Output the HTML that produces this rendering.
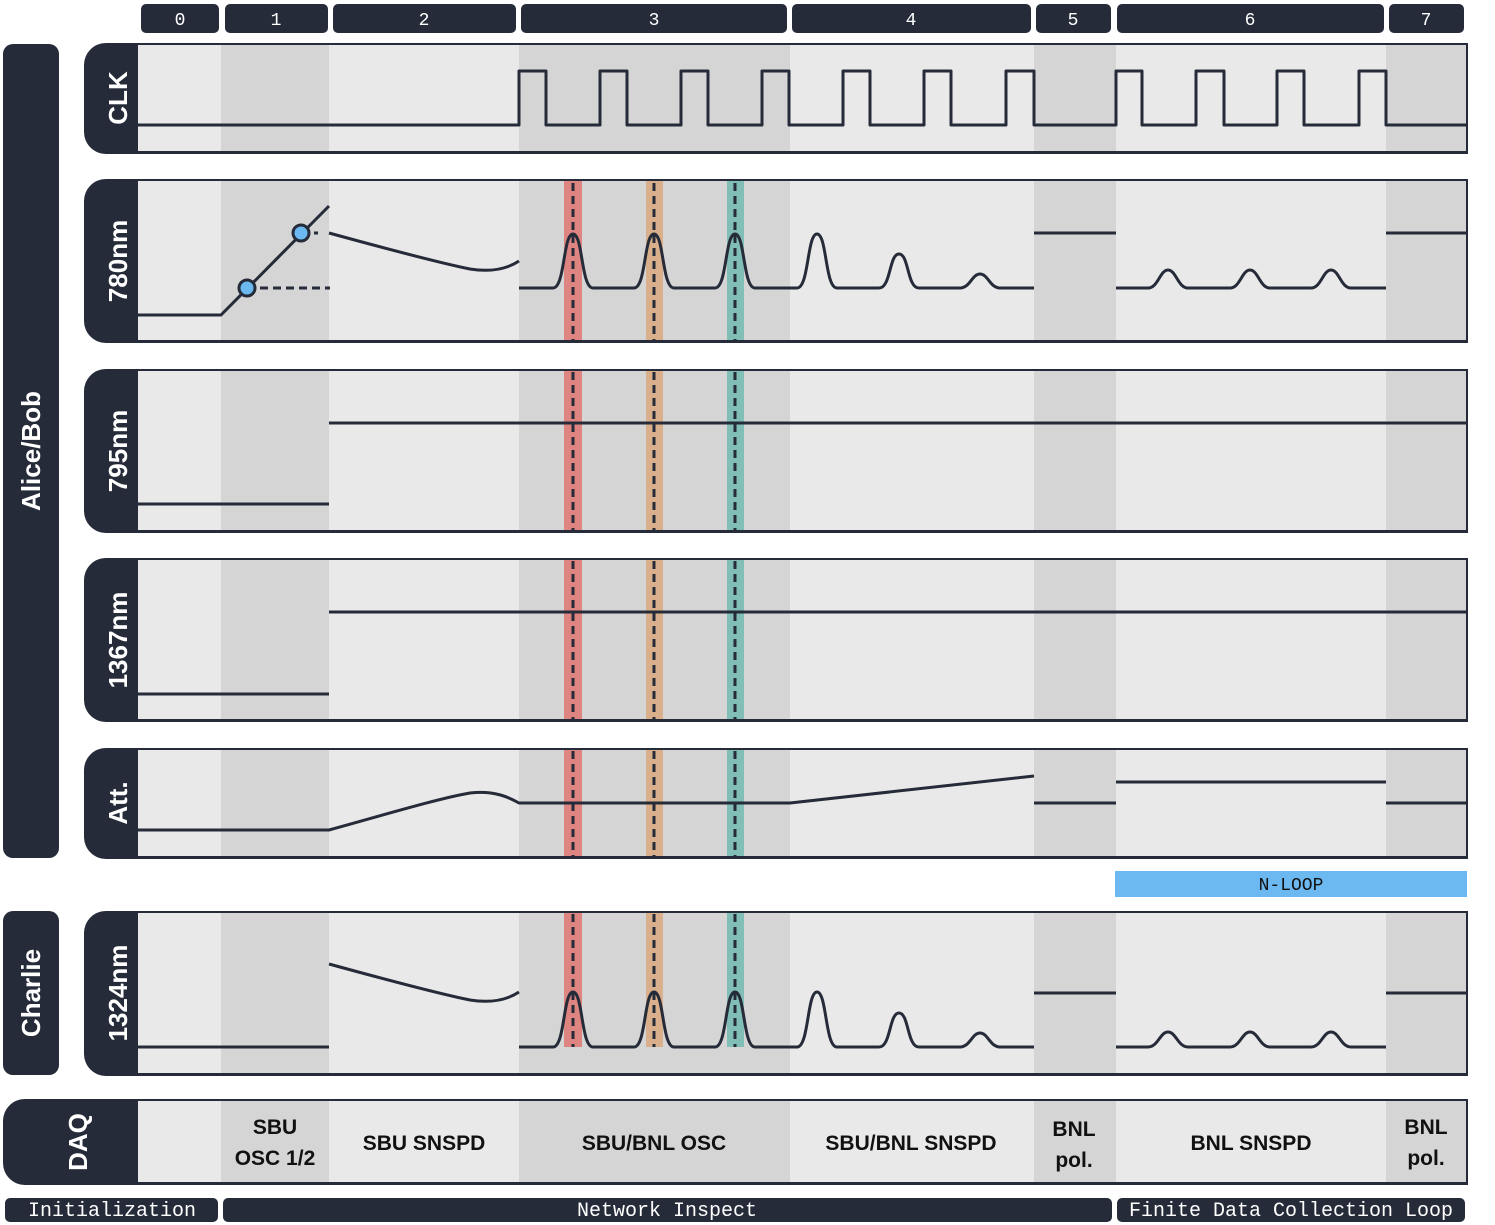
<!DOCTYPE html>
<html><head><meta charset="utf-8"><style>
html,body{margin:0;padding:0;background:#fff;overflow:hidden;width:1495px;height:1225px;}
svg{display:block;}
.m{font-family:"Liberation Mono",monospace;fill:#fff;font-size:18px;text-anchor:middle;}
.mb{font-family:"Liberation Mono",monospace;fill:#fff;font-size:20px;text-anchor:middle;}
.lb{font-family:"Liberation Sans",sans-serif;fill:#fff;font-size:26px;font-weight:bold;text-anchor:middle;}
.d{font-family:"Liberation Sans",sans-serif;fill:#111;font-size:21px;font-weight:bold;text-anchor:middle;}
.w{fill:none;stroke:#252b38;stroke-width:3;stroke-linejoin:round;}
.ds{fill:none;stroke:#252b38;stroke-width:3;stroke-dasharray:8 5;}
</style></head><body>
<svg width="1495" height="1225" viewBox="0 0 1495 1225" xmlns="http://www.w3.org/2000/svg">
<defs>
<g id="cols">
<rect x="138" width="83" height="200" fill="#e9e9e9"/>
<rect x="221" width="108" height="200" fill="#d5d5d5"/>
<rect x="329" width="190" height="200" fill="#e9e9e9"/>
<rect x="519" width="271" height="200" fill="#d5d5d5"/>
<rect x="790" width="244" height="200" fill="#e9e9e9"/>
<rect x="1034" width="82" height="200" fill="#d5d5d5"/>
<rect x="1116" width="270" height="200" fill="#e9e9e9"/>
<rect x="1386" width="81" height="200" fill="#d5d5d5"/>
</g>
<clipPath id="c1"><rect x="138" y="45" width="1328" height="106"/></clipPath>
<clipPath id="c2"><rect x="138" y="181" width="1328" height="159"/></clipPath>
<clipPath id="c3"><rect x="138" y="371" width="1328" height="159"/></clipPath>
<clipPath id="c4"><rect x="138" y="560" width="1328" height="159"/></clipPath>
<clipPath id="c5"><rect x="138" y="750" width="1328" height="106"/></clipPath>
<clipPath id="c6"><rect x="138" y="913" width="1328" height="160"/></clipPath>
<clipPath id="c7"><rect x="138" y="1101" width="1328" height="81"/></clipPath>
</defs>

<g fill="#252b38">
<rect x="141" y="4" width="78" height="29" rx="5"/>
<rect x="225" y="4" width="103" height="29" rx="5"/>
<rect x="333" y="4" width="183" height="29" rx="5"/>
<rect x="521" y="4" width="266" height="29" rx="5"/>
<rect x="792" y="4" width="239" height="29" rx="5"/>
<rect x="1036" y="4" width="75" height="29" rx="5"/>
<rect x="1117" y="4" width="267" height="29" rx="5"/>
<rect x="1389" y="4" width="75" height="29" rx="5"/>
</g>
<g class="m">
<text x="180" y="25">0</text><text x="276" y="25">1</text><text x="424" y="25">2</text><text x="654" y="25">3</text>
<text x="911" y="25">4</text><text x="1073" y="25">5</text><text x="1250" y="25">6</text><text x="1426" y="25">7</text>
</g>

<rect x="3" y="44" width="56" height="814" rx="10" fill="#252b38"/>
<rect x="3" y="911" width="56" height="164" rx="10" fill="#252b38"/>
<text class="lb" transform="translate(40,451) rotate(-90)">Alice/Bob</text>
<text class="lb" transform="translate(40,993) rotate(-90)">Charlie</text>

<g fill="#252b38">
<rect x="84" y="43" width="1384" height="111" rx="22"/><rect x="200" y="43" width="1268" height="111"/>
<rect x="84" y="179" width="1384" height="164" rx="22"/><rect x="200" y="179" width="1268" height="164"/>
<rect x="84" y="369" width="1384" height="164" rx="22"/><rect x="200" y="369" width="1268" height="164"/>
<rect x="84" y="558" width="1384" height="164" rx="22"/><rect x="200" y="558" width="1268" height="164"/>
<rect x="84" y="748" width="1384" height="111" rx="22"/><rect x="200" y="748" width="1268" height="111"/>
<rect x="84" y="911" width="1384" height="165" rx="22"/><rect x="200" y="911" width="1268" height="165"/>
<rect x="3" y="1099" width="1465" height="86" rx="22"/><rect x="200" y="1099" width="1268" height="86"/>
</g>
<g clip-path="url(#c1)"><use href="#cols" y="43"/></g>
<g clip-path="url(#c2)"><use href="#cols" y="179"/></g>
<g clip-path="url(#c3)"><use href="#cols" y="369"/></g>
<g clip-path="url(#c4)"><use href="#cols" y="558"/></g>
<g clip-path="url(#c5)"><use href="#cols" y="748"/></g>
<g clip-path="url(#c6)"><use href="#cols" y="911"/></g>
<g clip-path="url(#c7)"><use href="#cols" y="1099"/></g>

<g class="lb">
<text transform="translate(127,98) rotate(-90)">CLK</text>
<text transform="translate(127,261) rotate(-90)">780nm</text>
<text transform="translate(127,451) rotate(-90)">795nm</text>
<text transform="translate(127,640) rotate(-90)">1367nm</text>
<text transform="translate(127,803) rotate(-90)">Att.</text>
<text transform="translate(127,993) rotate(-90)">1324nm</text>
<text transform="translate(87,1142) rotate(-90)">DAQ</text>
</g>

<g>
<rect x="564" y="181" width="18" height="159" fill="#de8582"/>
<rect x="646" y="181" width="17" height="159" fill="#d9b08b"/>
<rect x="727" y="181" width="17" height="159" fill="#80beb6"/>
<rect x="564" y="371" width="18" height="159" fill="#de8582"/>
<rect x="646" y="371" width="17" height="159" fill="#d9b08b"/>
<rect x="727" y="371" width="17" height="159" fill="#80beb6"/>
<rect x="564" y="560" width="18" height="159" fill="#de8582"/>
<rect x="646" y="560" width="17" height="159" fill="#d9b08b"/>
<rect x="727" y="560" width="17" height="159" fill="#80beb6"/>
<rect x="564" y="750" width="18" height="106" fill="#de8582"/>
<rect x="646" y="750" width="17" height="106" fill="#d9b08b"/>
<rect x="727" y="750" width="17" height="106" fill="#80beb6"/>
<rect x="564" y="913" width="18" height="134" fill="#de8582"/>
<rect x="646" y="913" width="17" height="134" fill="#d9b08b"/>
<rect x="727" y="913" width="17" height="134" fill="#80beb6"/>
</g>
<g class="ds">
<path d="M573 183V340M654 183V340M735 183V340"/>
<path d="M573 372V530M654 372V530M735 372V530"/>
<path d="M573 561V719M654 561V719M735 561V719"/>
<path d="M573 751V857M654 751V857M735 751V857"/>
<path d="M573 914V1047M654 914V1047M735 914V1047"/>
</g>

<path class="w" d="M138 125H519V71H546V125H600V71H627V125H681V71H708V125H762V71H789V125H843V71H870V125H924V71H951V125H1006V71H1034V125H1116V71H1142V125H1196V71H1224V125H1277V71H1304V125H1359V71H1386V125H1467"/>

<path class="w" d="M138 315H221L329 206"/>
<path class="ds" d="M247 288H330M301 233H318"/>
<path class="w" d="M329 233C380 247 440 263 470 269C495 273 510 267 519 261"/>
<path class="w" d="M519 288H553C565 288 563 234 573 234C583 234 581 288 593 288H634C646 288 644 234 654 234C664 234 662 288 674 288H715C727 288 725 234 735 234C745 234 743 288 755 288H797C809 288 807 234 817 234C827 234 825 288 837 288H879C891 288 889 254 899 254C909 254 907 288 919 288H960C970 288 972 274 980 274C988 274 990 288 1000 288H1034"/>
<path class="w" d="M1034 233H1116M1386 233H1467"/>
<path class="w" d="M1116 288H1148C1158 288 1160 270 1168 270C1176 270 1178 288 1188 288H1230C1240 288 1242 270 1250 270C1258 270 1260 288 1270 288H1311C1321 288 1323 270 1331 270C1339 270 1341 288 1351 288H1386"/>
<circle cx="247" cy="288" r="8" fill="#6cb8f0" stroke="#252b38" stroke-width="3"/>
<circle cx="301" cy="233" r="8" fill="#6cb8f0" stroke="#252b38" stroke-width="3"/>

<path class="w" d="M138 504H329M329 423H1467"/>
<path class="w" d="M138 694H329M329 612H1467"/>

<path class="w" d="M138 830H329C380 816 440 798 470 793C495 790 510 798 519 803H790L1034 776"/>
<path class="w" d="M1034 803H1116M1116 782H1386M1386 803H1467"/>

<rect x="1115" y="871" width="352" height="26" fill="#6cb8f0"/>
<text x="1291" y="890" font-family="Liberation Mono,monospace" font-size="18" fill="#111" text-anchor="middle">N-LOOP</text>

<path class="w" d="M138 1047H329"/>
<path class="w" d="M329 964C380 978 440 994 470 1000C495 1004 510 998 519 992"/>
<path class="w" d="M519 1047H553C565 1047 563 992 573 992C583 992 581 1047 593 1047H634C646 1047 644 992 654 992C664 992 662 1047 674 1047H715C727 1047 725 992 735 992C745 992 743 1047 755 1047H797C809 1047 807 992 817 992C827 992 825 1047 837 1047H879C891 1047 889 1013 899 1013C909 1013 907 1047 919 1047H960C970 1047 972 1033 980 1033C988 1033 990 1047 1000 1047H1034"/>
<path class="w" d="M1034 993H1116M1386 993H1467"/>
<path class="w" d="M1116 1047H1148C1158 1047 1160 1032 1168 1032C1176 1032 1178 1047 1188 1047H1230C1240 1047 1242 1032 1250 1032C1258 1032 1260 1047 1270 1047H1311C1321 1047 1323 1032 1331 1032C1339 1032 1341 1047 1351 1047H1386"/>

<g class="d">
<text x="275" y="1134">SBU</text><text x="275" y="1165">OSC 1/2</text>
<text x="424" y="1150">SBU SNSPD</text>
<text x="654" y="1150">SBU/BNL OSC</text>
<text x="911" y="1150">SBU/BNL SNSPD</text>
<text x="1074" y="1136">BNL</text><text x="1074" y="1167">pol.</text>
<text x="1251" y="1150">BNL SNSPD</text>
<text x="1426" y="1134">BNL</text><text x="1426" y="1165">pol.</text>
</g>

<g fill="#252b38">
<rect x="5" y="1198" width="213" height="24" rx="5"/>
<rect x="223" y="1198" width="889" height="24" rx="5"/>
<rect x="1117" y="1198" width="348" height="24" rx="5"/>
</g>
<g class="mb">
<text x="112" y="1216">Initialization</text>
<text x="667" y="1216">Network Inspect</text>
<text x="1291" y="1216">Finite Data Collection Loop</text>
</g>
</svg>
</body></html>
